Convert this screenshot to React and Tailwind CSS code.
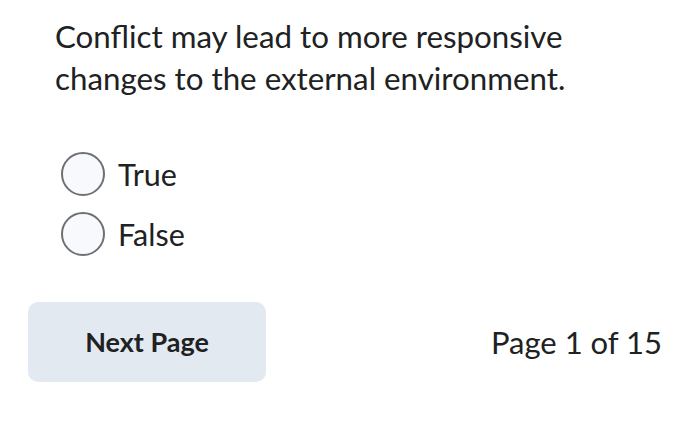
export default function App() {
  return (
    <div className="w-[687px] h-[425px] bg-white text-[#202122] overflow-hidden" style={{ fontFamily: "Lato, 'Noto Sans', sans-serif" }}>
      <div className="pl-[55px] pt-[15px] text-[31.3px] leading-[42px]">
        <p>Conflict may lead to more responsive</p>
        <p>changes to the external environment.</p>
      </div>
      <div className="pl-[61px] pt-[53px] flex flex-col gap-[16px]">
        <div className="flex items-center gap-[13px]">
          <span className="w-[44px] h-[44px] rounded-full border-2 border-[#6d7174] bg-[#f7f9fd]"></span>
          <span className="text-[30.5px] leading-[44px]">True</span>
        </div>
        <div className="flex items-center gap-[13px]">
          <span className="w-[44px] h-[44px] rounded-full border-2 border-[#6d7174] bg-[#f7f9fd]"></span>
          <span className="text-[30.5px] leading-[44px]">False</span>
        </div>
      </div>
      <div className="flex items-center justify-between pl-[28px] pr-[25px] pt-[46px]">
        <button className="w-[238px] h-[80px] rounded-[10px] bg-[#e3e9f1] text-[27px] font-bold text-[#202122]">Next Page</button>
        <span className="text-[31px]">Page 1 of 15</span>
      </div>
    </div>
  );
}
